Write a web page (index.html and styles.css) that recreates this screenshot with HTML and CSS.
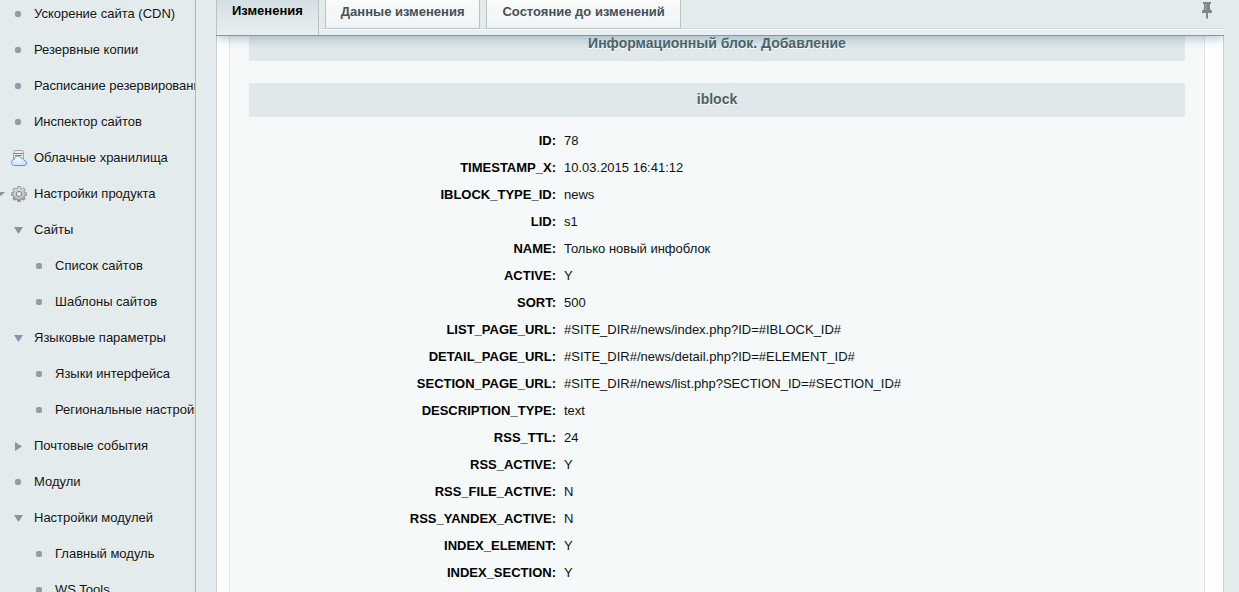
FILE: index.html
```html
<!DOCTYPE html>
<html lang="ru">
<head>
<meta charset="utf-8">
<title>Изменения</title>
<link rel="stylesheet" href="styles.css">
</head>
<body>
<svg class="sprite" aria-hidden="true">
  <defs>
    <linearGradient id="metal" x1="0" y1="0" x2="0" y2="1"><stop offset="0" stop-color="#e2e2e2"/><stop offset="1" stop-color="#969696"/></linearGradient>
    <linearGradient id="sky" x1="0" y1="0" x2="0" y2="1"><stop offset="0" stop-color="#ffffff"/><stop offset="1" stop-color="#c3e4fb"/></linearGradient>
    <symbol id="dot" viewBox="0 0 16 16"><rect x="4" y="5" width="6" height="6" rx="2" fill="#929ca9"/></symbol>
    <symbol id="down" viewBox="0 0 16 16"><path d="M3 5h9L7.500 12z" fill="#8794a3"/></symbol>
    <symbol id="right" viewBox="0 0 16 16"><path d="M4 4v9l7-4.500z" fill="#8794a3"/></symbol>
    <symbol id="cloud" viewBox="0 0 16 16">
      <path d="M3.500.5h8l1 3v6H2.500v-6z" fill="#f1f1f1" stroke="#a2a2a2"/>
      <path d="M3 3.500h9M4 5.500h7" stroke="#808080"/>
      <path d="M3.500 15.500C1.500 15.500.5 14.200.5 12.500c0-1.700 1-2.900 2.500-3C3.300 7.300 4.600 6 6.700 6c1.700 0 2.900.9 3.400 2.300 1.700-.2 2.800.8 2.900 2.200 1.500 0 2.500 1 2.500 2.400 0 1.600-1 2.600-2.500 2.600z" fill="url(#sky)" stroke="#5a93cf"/>
    </symbol>
    <symbol id="gear" viewBox="0 0 16 16">
      <path d="M6.700.5h2.600l.4 2 1.300.5 1.700-1.100 1.600 1.600L13.100 5.200l.5 1.300 1.900.3v2.500l-1.900.4-.5 1.300 1.200 1.700-1.600 1.600L11 13.100l-1.300.5-.4 1.900H6.700l-.4-1.900-1.300-.5-1.700 1.200-1.600-1.600L2.900 11l-.5-1.300-1.900-.4V6.800l1.900-.3.5-1.300-1.200-1.700 1.600-1.600L5 3l1.300-.5z" fill="url(#metal)" stroke="#858585" stroke-width=".8"/>
      <circle cx="8" cy="8" r="4" fill="none" stroke="#d0d0d0" stroke-width="1.500"/>
      <circle cx="8" cy="8" r="2.600" fill="#e6eded" stroke="#858585"/>
    </symbol>
  </defs>
</svg>
<div class="layout">
  <nav class="sidebar" aria-label="Настройки">
    <ul class="menu">
      <li><a class="item" href="#"><svg class="icon"><use href="#dot"/></svg>Ускорение сайта (CDN)</a></li>
      <li><a class="item" href="#"><svg class="icon"><use href="#dot"/></svg>Резервные копии</a></li>
      <li><a class="item" href="#"><svg class="icon"><use href="#dot"/></svg>Расписание резервирования</a></li>
      <li><a class="item" href="#"><svg class="icon"><use href="#dot"/></svg>Инспектор сайтов</a></li>
      <li><a class="item" href="#"><svg class="icon"><use href="#cloud"/></svg>Облачные хранилища</a></li>
      <li><a class="item item-open" href="#"><svg class="icon"><use href="#gear"/></svg>Настройки продукта</a></li>
      <li><a class="item" href="#"><svg class="icon"><use href="#down"/></svg>Сайты</a>
        <ul class="submenu">
          <li><a class="item" href="#"><svg class="icon"><use href="#dot"/></svg>Список сайтов</a></li>
          <li><a class="item" href="#"><svg class="icon"><use href="#dot"/></svg>Шаблоны сайтов</a></li>
        </ul></li>
      <li><a class="item" href="#"><svg class="icon"><use href="#down"/></svg>Языковые параметры</a>
        <ul class="submenu">
          <li><a class="item" href="#"><svg class="icon"><use href="#dot"/></svg>Языки интерфейса</a></li>
          <li><a class="item" href="#"><svg class="icon"><use href="#dot"/></svg>Региональные настройки</a></li>
        </ul></li>
      <li><a class="item" href="#"><svg class="icon"><use href="#right"/></svg>Почтовые события</a></li>
      <li><a class="item" href="#"><svg class="icon"><use href="#dot"/></svg>Модули</a></li>
      <li><a class="item" href="#"><svg class="icon"><use href="#down"/></svg>Настройки модулей</a>
        <ul class="submenu">
          <li><a class="item" href="#"><svg class="icon"><use href="#dot"/></svg>Главный модуль</a></li>
          <li><a class="item" href="#"><svg class="icon"><use href="#dot"/></svg>WS Tools</a></li>
        </ul></li>
    </ul>
  </nav>
  <main class="main">
    <header class="tabbar">
      <div class="tabs" role="tablist">
        <button class="tab tab-active" role="tab" aria-selected="true">Изменения</button>
        <button class="tab" role="tab" aria-selected="false">Данные изменения</button>
        <button class="tab" role="tab" aria-selected="false">Состояние до изменений</button>
      </div>
      <button class="pin" aria-label="Закрепить">
        <svg width="10" height="17" viewBox="0 0 10 17"><path d="M1 0h8v2H8v5l2 2v2H6v5l-1 1-1-1v-5H0V9l2-2V2H1z" fill="#7d868a"/><path d="M4 2v6" stroke="#a9b1b4"/></svg>
      </button>
    </header>
    <div class="panel">
      <div class="content">
        <h2 class="heading">Информационный блок. Добавление</h2>
        <h2 class="heading">iblock</h2>
        <table class="fields">
          <tbody>
            <tr><th scope="row">ID:</th><td>78</td></tr>
            <tr><th scope="row">TIMESTAMP_X:</th><td>10.03.2015 16:41:12</td></tr>
            <tr><th scope="row">IBLOCK_TYPE_ID:</th><td>news</td></tr>
            <tr><th scope="row">LID:</th><td>s1</td></tr>
            <tr><th scope="row">NAME:</th><td>Только новый инфоблок</td></tr>
            <tr><th scope="row">ACTIVE:</th><td>Y</td></tr>
            <tr><th scope="row">SORT:</th><td>500</td></tr>
            <tr><th scope="row">LIST_PAGE_URL:</th><td>#SITE_DIR#/news/index.php?ID=#IBLOCK_ID#</td></tr>
            <tr><th scope="row">DETAIL_PAGE_URL:</th><td>#SITE_DIR#/news/detail.php?ID=#ELEMENT_ID#</td></tr>
            <tr><th scope="row">SECTION_PAGE_URL:</th><td>#SITE_DIR#/news/list.php?SECTION_ID=#SECTION_ID#</td></tr>
            <tr><th scope="row">DESCRIPTION_TYPE:</th><td>text</td></tr>
            <tr><th scope="row">RSS_TTL:</th><td>24</td></tr>
            <tr><th scope="row">RSS_ACTIVE:</th><td>Y</td></tr>
            <tr><th scope="row">RSS_FILE_ACTIVE:</th><td>N</td></tr>
            <tr><th scope="row">RSS_YANDEX_ACTIVE:</th><td>N</td></tr>
            <tr><th scope="row">INDEX_ELEMENT:</th><td>Y</td></tr>
            <tr><th scope="row">INDEX_SECTION:</th><td>Y</td></tr>
          </tbody>
        </table>
      </div>
    </div>
  </main>
</div>
</body>
</html>
```
FILE: styles.css
```css
* { box-sizing: border-box; }

body {
  margin: 0;
  background: #e3ebed;
  color: #111;
  font: 13px/18px "Liberation Sans", Arial, sans-serif;
}

.sprite { position: absolute; width: 0; height: 0; }

.layout {
  display: flex;
  height: 100vh;
  overflow: hidden;
}

/* Sidebar */
.sidebar {
  flex: 0 0 196px;
  overflow: hidden;
  border-right: 1px solid #a8bac6;
}

.menu, .submenu { margin: 0; padding: 0; list-style: none; }
.menu { margin-top: -4px; }

.item {
  display: flex;
  align-items: center;
  gap: 7px;
  height: 36px;
  padding-left: 11px;
  color: #111;
  text-decoration: none;
  text-shadow: 0 1px #f4f8f8;
  white-space: nowrap;
}
.submenu .item { padding-left: 32px; }
.icon { flex: none; width: 16px; height: 16px; }

.item-open { position: relative; }
.item-open::before {
  content: "";
  position: absolute;
  left: -3px;
  border: 4px solid transparent;
  border-top-color: #8794a3;
  border-bottom: 0;
}

/* Main area */
.main {
  display: flex;
  flex: 1;
  flex-direction: column;
  min-width: 0;
  margin: 0 15px 0 20px;
}

.tabbar {
  z-index: 1;
  display: flex;
  flex: none;
  justify-content: space-between;
  align-items: flex-start;
  height: 36px;
  border-bottom: 1px solid #8e9497;
  background: linear-gradient(#d3dade, #d3dade) 0 28px / 100% 1px no-repeat,
    linear-gradient(#fff, #fff) 0 29px / 100% 1px no-repeat,
    linear-gradient(#e8eff2, #e8eff2) 0 30px / 100% 6px no-repeat, #e3ebed;
  box-shadow: 0 2px 12px rgba(80, 120, 140, .45);
  clip-path: inset(0 0 -20px 0);
}

.tabs { display: flex; gap: 6px; }

.tab {
  height: 29px;
  padding: 0 15px 4px;
  border: solid #b9c4c7;
  border-width: 0 1px 1px;
  background: linear-gradient(#fafbfb, #f0f3f4);
  color: #45505a;
  font: bold 13px/18px "Liberation Sans", Arial, sans-serif;
}
.tab-active {
  height: 35px;
  padding-bottom: 14px;
  border-bottom: 0;
  background: linear-gradient(#d5dfe3, #e8eff2);
  color: #000;
}

.pin {
  height: 17px;
  margin: 2px 12px 0 0;
  padding: 0;
  border: 0;
  background: none;
}
.pin svg { display: block; }

.panel {
  flex: 1;
  min-height: 0;
  padding: 0 18px 0 12px;
  overflow: hidden;
  border: solid #c7d2d5;
  border-width: 0 1px;
  background: #fff;
}

.content {
  margin-top: -9px;
  padding: 0 19px 20px;
  border: solid #dce6eb;
  border-width: 0 1px;
  background: #f5f9fa;
}

.heading {
  margin: 0 0 22px;
  padding: 7px 8px 9px;
  background: #e0e8ea;
  color: #4b6267;
  font-size: 14px;
  line-height: 18px;
  text-align: center;
  text-shadow: 0 1px #fff;
}

.fields {
  width: 100%;
  margin-top: -12px;
  border-collapse: collapse;
  table-layout: fixed;
}
.fields th, .fields td { height: 27px; padding: 0 0 0 3px; }
.fields th {
  width: calc(100% / 3);
  padding-right: 5px;
  color: #000;
  text-align: right;
}
```
